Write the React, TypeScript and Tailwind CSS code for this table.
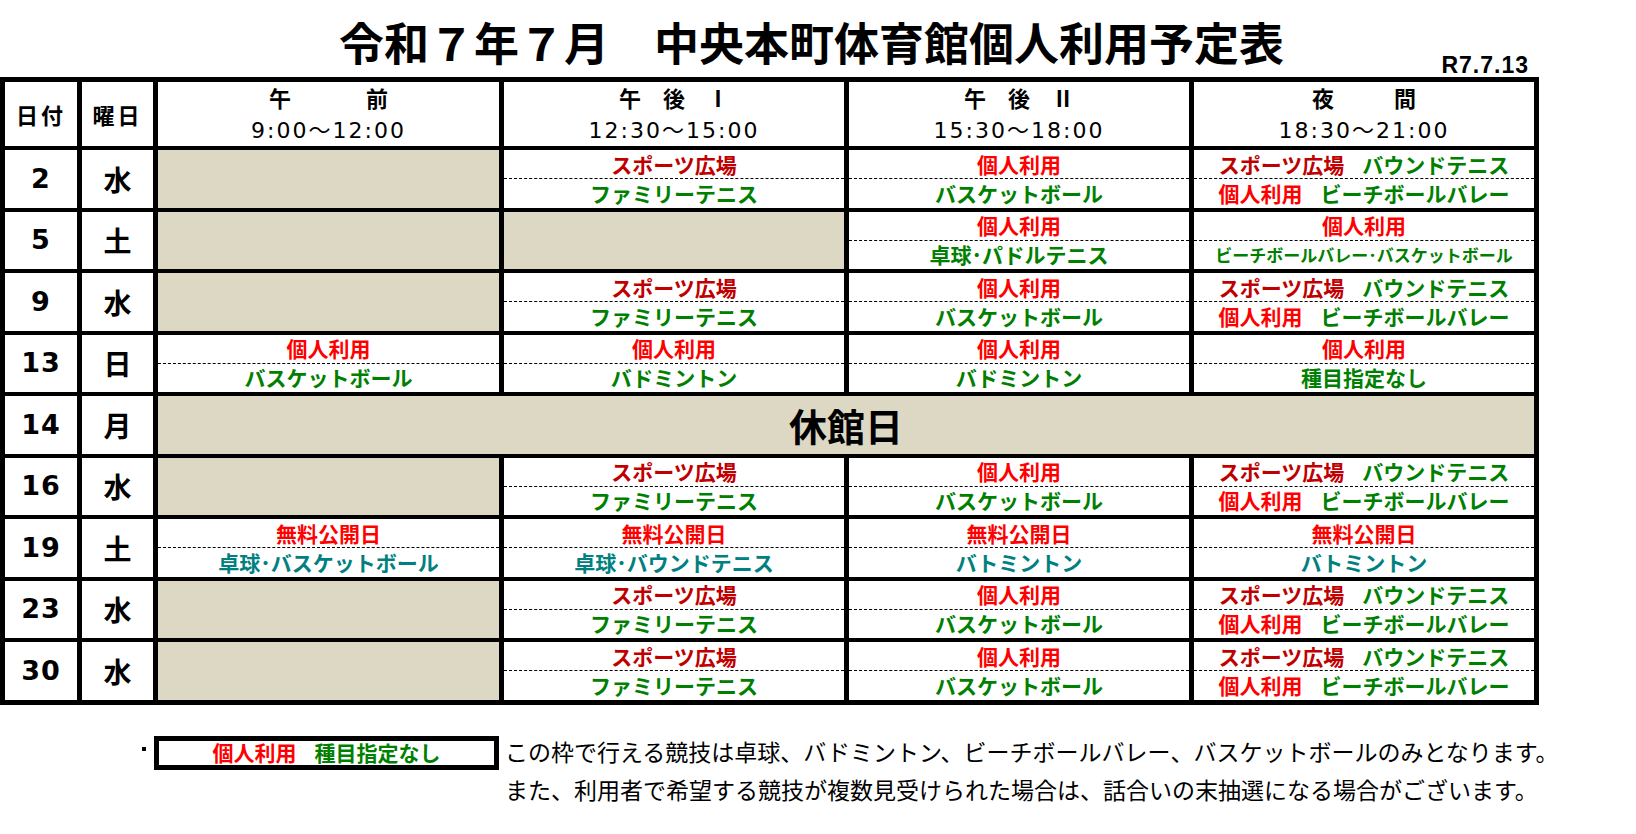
import React from 'react';

type Seg = { t: string; c: string };
type Cell =
  | { kind: 'closed' }
  | { kind: 'split'; top: Seg[]; bottom: Seg[]; small?: boolean };

interface Row {
  day: string;
  week: string;
  cells?: Cell[];
}

const red = 'text-[#ff0000]';
const darkRed = 'text-[#c00000]';
const green = 'text-[#008000]';
const teal = 'text-[#008080]';

const s = (t: string, c: string): Seg => ({ t, c });
const closed: Cell = { kind: 'closed' };

const sports = [s('スポーツ広場', darkRed)];
const kojin = [s('個人利用', red)];
const muryo = [s('無料公開日', red)];

const weekday: Cell[] = [
  closed,
  { kind: 'split', top: sports, bottom: [s('ファミリーテニス', green)] },
  { kind: 'split', top: kojin, bottom: [s('バスケットボール', green)] },
  {
    kind: 'split',
    top: [s('スポーツ広場', darkRed), s('バウンドテニス', green)],
    bottom: [s('個人利用', red), s('ビーチボールバレー', green)],
  },
];

const rows: Row[] = [
  { day: '2', week: '水', cells: weekday },
  {
    day: '5',
    week: '土',
    cells: [
      closed,
      closed,
      { kind: 'split', top: kojin, bottom: [s('卓球･パドルテニス', green)] },
      { kind: 'split', top: kojin, bottom: [s('ビーチボールバレー･バスケットボール', green)], small: true },
    ],
  },
  { day: '9', week: '水', cells: weekday },
  {
    day: '13',
    week: '日',
    cells: [
      { kind: 'split', top: kojin, bottom: [s('バスケットボール', green)] },
      { kind: 'split', top: kojin, bottom: [s('バドミントン', green)] },
      { kind: 'split', top: kojin, bottom: [s('バドミントン', green)] },
      { kind: 'split', top: kojin, bottom: [s('種目指定なし', green)] },
    ],
  },
  { day: '14', week: '月' },
  { day: '16', week: '水', cells: weekday },
  {
    day: '19',
    week: '土',
    cells: [
      { kind: 'split', top: muryo, bottom: [s('卓球･バスケットボール', teal)] },
      { kind: 'split', top: muryo, bottom: [s('卓球･バウンドテニス', teal)] },
      { kind: 'split', top: muryo, bottom: [s('バトミントン', teal)] },
      { kind: 'split', top: muryo, bottom: [s('バトミントン', teal)] },
    ],
  },
  { day: '23', week: '水', cells: weekday },
  { day: '30', week: '水', cells: weekday },
];

const Line = ({ segs, small }: { segs: Seg[]; small?: boolean }) => (
  <div
    className={`flex flex-1 items-center justify-center gap-[18px] font-bold leading-none ${
      small ? 'text-[17px]' : 'text-[21px]'
    }`}
  >
    {segs.map((g, i) => (
      <span key={i} className={g.c}>
        {g.t}
      </span>
    ))}
  </div>
);

const CellBox = ({ cell }: { cell: Cell }) => {
  if (cell.kind === 'closed') return <div className="bg-[#ddd8c4]" />;
  return (
    <div className="flex flex-col bg-white">
      <Line segs={cell.top} />
      <div className="border-t border-dashed border-black" />
      <Line segs={cell.bottom} small={cell.small} />
    </div>
  );
};

const periods = [
  { label: ['午', '前'], gap: 'gap-[75px]', time: '9:00～12:00' },
  { label: ['午', '後', 'Ⅰ'], gap: 'gap-[22px]', time: '12:30～15:00' },
  { label: ['午', '後', 'Ⅱ'], gap: 'gap-[22px]', time: '15:30～18:00' },
  { label: ['夜', '間'], gap: 'gap-[60px]', time: '18:30～21:00' },
];

export default function App() {
  return (
    <div className="min-h-screen w-[1636px] bg-white text-black font-['Noto_Sans_CJK_JP',sans-serif]">
      {/* title */}
      <div className="flex h-[77px] w-[1539px] justify-between">
        <h1 className="pl-[339px] pt-[14px] text-[45px] font-bold leading-[56px]">
          令和７年７月　中央本町体育館個人利用予定表
        </h1>
        <div className="self-end pr-[10px] font-['Liberation_Sans',sans-serif] text-[23px] font-bold leading-[23px] tracking-[1px]">
          R7.7.13
        </div>
      </div>

      {/* schedule table */}
      <div className="grid w-[1539px] grid-cols-[72px_71px_341px_340px_340px_340px] grid-rows-[64px_repeat(9,57.5px)] gap-x-[5px] gap-y-[4px] bg-black p-[5px]">
        <div className="flex items-center justify-center bg-white text-[22px] font-bold tracking-[3px]">日付</div>
        <div className="flex items-center justify-center bg-white text-[22px] font-bold tracking-[3px]">曜日</div>
        {periods.map((p) => (
          <div key={p.time} className="flex flex-col items-center justify-center bg-white">
            <div className={`flex ${p.gap} text-[22px] font-bold leading-[28px]`}>
              {p.label.map((ch) => (
                <span key={ch}>{ch}</span>
              ))}
            </div>
            <div className="mt-[6px] font-['DejaVu_Sans','Noto_Sans_CJK_JP',sans-serif] text-[22px] leading-[28px] tracking-[2px]">
              {p.time}
            </div>
          </div>
        ))}

        {rows.map((r) => (
          <React.Fragment key={r.day}>
            <div className="flex items-center justify-center bg-white font-['DejaVu_Sans',sans-serif] text-[27px] font-bold tracking-[1px]">
              {r.day}
            </div>
            <div className="flex items-center justify-center bg-white text-[28px] font-bold">{r.week}</div>
            {r.cells ? (
              r.cells.map((c, i) => <CellBox key={i} cell={c} />)
            ) : (
              <div className="col-span-4 flex items-center justify-center bg-[#ddd8c4] text-[38px] font-bold">
                休館日
              </div>
            )}
          </React.Fragment>
        ))}
      </div>

      {/* legend */}
      <div className="mt-[27px] flex pl-[134px]">
        <div className="flex h-[38px] w-[20px] items-center justify-center">
          <span className="mt-[-4px] h-[4px] w-[4px] bg-black" />
        </div>
        <div className="mt-[4px] flex h-[34px] w-[345px] items-center justify-center gap-[18px] border-[5px] border-black text-[21px] font-bold leading-none">
          <span className="text-[#ff0000]">個人利用</span>
          <span className="text-[#008000]">種目指定なし</span>
        </div>
        <div className="ml-[6px] text-[23px] leading-[38px]">
          <p>この枠で行える競技は卓球、バドミントン、ビーチボールバレー、バスケットボールのみとなります。</p>
          <p>また、利用者で希望する競技が複数見受けられた場合は、話合いの末抽選になる場合がございます。</p>
        </div>
      </div>
    </div>
  );
}
